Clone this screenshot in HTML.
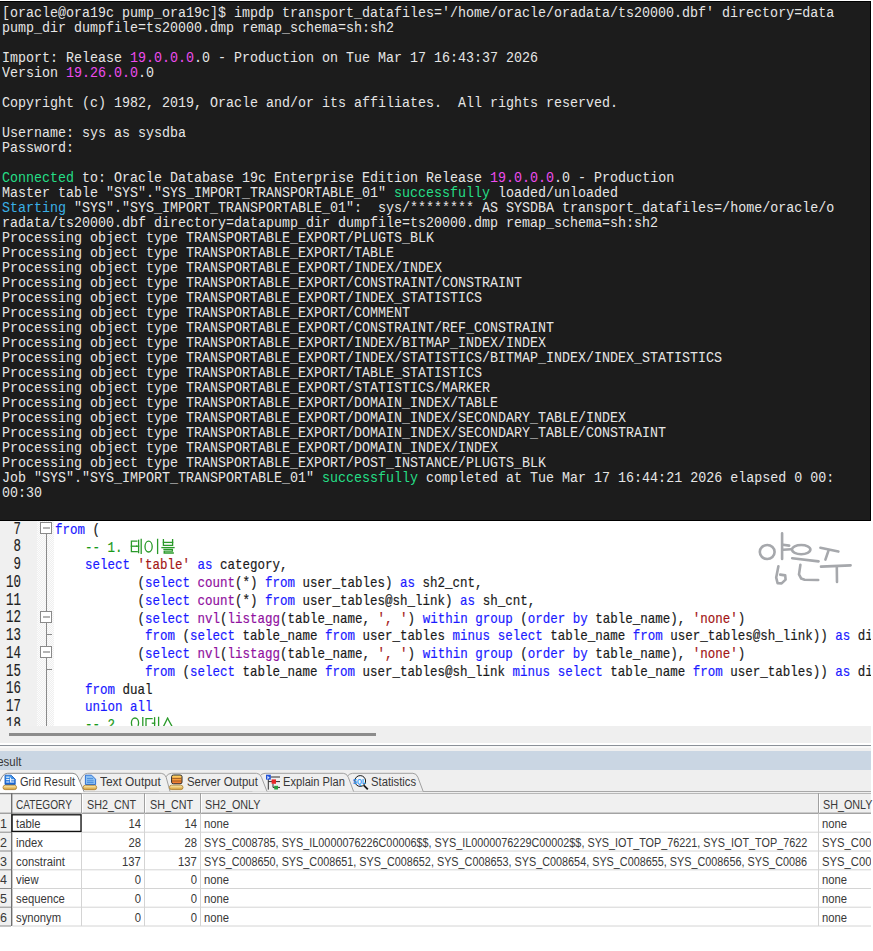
<!DOCTYPE html><html><head><meta charset="utf-8"><style>
*{margin:0;padding:0;box-sizing:border-box}
html,body{width:873px;height:951px;overflow:hidden;background:#fff}
body{position:relative;font-family:"Liberation Sans",sans-serif}
.a{position:absolute}
#term{left:0;top:1px;width:871px;height:520px;background:#1c1c1c;border:1px solid #000;border-left:none;overflow:hidden}
#tt{left:2px;top:4px;font-family:"Liberation Mono",monospace;font-size:14px;line-height:15px;color:#e6e6e6;white-space:pre;transform-origin:0 0;transform:scaleX(0.95238)}
.m{color:#ee4cee}.g{color:#25de86}.c{color:#3ab0e6}
#ed{left:0;top:521px;width:871px;height:206px;background:#fff;overflow:hidden}
#gut{left:0;top:0;width:37px;height:206px;background:#f0f0f0}
#hatch{left:37px;top:0;width:17px;height:206px;background-color:#fcfcfc;background-image:repeating-conic-gradient(#efefef 0 25%,#fcfcfc 0 50%);background-size:2px 2px}
.code{font-family:"Liberation Mono",monospace;font-size:15px;line-height:17.74px;color:#1a1a1a;-webkit-text-stroke:0.2px currentColor;white-space:pre;transform-origin:0 0;transform:scaleX(0.8333)}
.k{color:#1a1aff}.f{color:#9010a0}.s{color:#a31515}.cm{color:#1a9a1a}
.ln{-webkit-text-stroke:0.15px currentColor;font-family:"Liberation Mono",monospace;font-size:18px;line-height:17.74px;color:#202020;white-space:pre;text-align:right;width:28px;transform-origin:100% 0;transform:scaleX(0.69)}
.ui{font-family:"Liberation Sans",sans-serif;font-size:12.5px;color:#383838;white-space:pre;line-height:15px}
.sx{display:inline-block;transform-origin:0 0}
.sxr{display:inline-block;transform-origin:100% 0}
</style></head><body>
<div id="term" class="a"><div id="tt" class="a">[oracle@ora19c pump_ora19c]$ impdp transport_datafiles='/home/oracle/oradata/ts20000.dbf' directory=data
pump_dir dumpfile=ts20000.dmp remap_schema=sh:sh2

Import: Release <span class="m">19.0.0.0</span>.0 - Production on Tue Mar 17 16:43:37 2026
Version <span class="m">19.26.0.0</span>.0

Copyright (c) 1982, 2019, Oracle and/or its affiliates.  All rights reserved.

Username: sys as sysdba
Password:

<span class="g">Connected</span> to: Oracle Database 19c Enterprise Edition Release <span class="m">19.0.0.0</span>.0 - Production
Master table "SYS"."SYS_IMPORT_TRANSPORTABLE_01" <span class="g">successfully</span> loaded/unloaded
<span class="c">Starting</span> "SYS"."SYS_IMPORT_TRANSPORTABLE_01":  sys/******** AS SYSDBA transport_datafiles=/home/oracle/o
radata/ts20000.dbf directory=datapump_dir dumpfile=ts20000.dmp remap_schema=sh:sh2
Processing object type TRANSPORTABLE_EXPORT/PLUGTS_BLK
Processing object type TRANSPORTABLE_EXPORT/TABLE
Processing object type TRANSPORTABLE_EXPORT/INDEX/INDEX
Processing object type TRANSPORTABLE_EXPORT/CONSTRAINT/CONSTRAINT
Processing object type TRANSPORTABLE_EXPORT/INDEX_STATISTICS
Processing object type TRANSPORTABLE_EXPORT/COMMENT
Processing object type TRANSPORTABLE_EXPORT/CONSTRAINT/REF_CONSTRAINT
Processing object type TRANSPORTABLE_EXPORT/INDEX/BITMAP_INDEX/INDEX
Processing object type TRANSPORTABLE_EXPORT/INDEX/STATISTICS/BITMAP_INDEX/INDEX_STATISTICS
Processing object type TRANSPORTABLE_EXPORT/TABLE_STATISTICS
Processing object type TRANSPORTABLE_EXPORT/STATISTICS/MARKER
Processing object type TRANSPORTABLE_EXPORT/DOMAIN_INDEX/TABLE
Processing object type TRANSPORTABLE_EXPORT/DOMAIN_INDEX/SECONDARY_TABLE/INDEX
Processing object type TRANSPORTABLE_EXPORT/DOMAIN_INDEX/SECONDARY_TABLE/CONSTRAINT
Processing object type TRANSPORTABLE_EXPORT/DOMAIN_INDEX/INDEX
Processing object type TRANSPORTABLE_EXPORT/POST_INSTANCE/PLUGTS_BLK
Job "SYS"."SYS_IMPORT_TRANSPORTABLE_01" <span class="g">successfully</span> completed at Tue Mar 17 16:44:21 2026 elapsed 0 00:
00:30</div></div>
<div id="ed" class="a"><div id="gut" class="a"></div><div id="hatch" class="a"></div>
<div class="a ln" style="left:-6.8px;top:-0.3px">7
8
9
10
11
12
13
14
15
16
17
18</div>
<div class="a code" style="left:55px;top:1px"><span class="k">from</span> (
    <span class="cm">-- 1. </span>
    <span class="k">select</span> <span class="s">&#x27;table&#x27;</span> <span class="k">as</span> category,
           (<span class="k">select</span> <span class="f">count</span>(*) <span class="k">from</span> user_tables) <span class="k">as</span> sh2_cnt,
           (<span class="k">select</span> <span class="f">count</span>(*) <span class="k">from</span> user_tables@sh_link) <span class="k">as</span> sh_cnt,
           (<span class="k">select</span> <span class="f">nvl</span>(<span class="f">listagg</span>(table_name, <span class="s">&#x27;, &#x27;</span>) <span class="k">within</span> <span class="k">group</span> (<span class="k">order</span> <span class="k">by</span> table_name), <span class="s">&#x27;none&#x27;</span>)
            <span class="k">from</span> (<span class="k">select</span> table_name <span class="k">from</span> user_tables <span class="k">minus</span> <span class="k">select</span> table_name <span class="k">from</span> user_tables@sh_link)) <span class="k">as</span> di
           (<span class="k">select</span> <span class="f">nvl</span>(<span class="f">listagg</span>(table_name, <span class="s">&#x27;, &#x27;</span>) <span class="k">within</span> <span class="k">group</span> (<span class="k">order</span> <span class="k">by</span> table_name), <span class="s">&#x27;none&#x27;</span>)
            <span class="k">from</span> (<span class="k">select</span> table_name <span class="k">from</span> user_tables@sh_link <span class="k">minus</span> <span class="k">select</span> table_name <span class="k">from</span> user_tables)) <span class="k">as</span> di
    <span class="k">from</span> dual
    <span class="k">union</span> <span class="k">all</span>
    <span class="cm">-- 2. </span></div>
<svg class="a" style="left:0;top:0" width="871" height="206"><g stroke="#8a8a8a" stroke-width="1" fill="none" shape-rendering="crispEdges"><line x1="46.5" y1="13" x2="46.5" y2="206"/><rect x="40.5" y="1.5" width="11" height="11" fill="#fff"/><line x1="42.5" y1="7.0" x2="50" y2="7.0" stroke="#b4b4b4" stroke-width="1.8"/><rect x="40.5" y="90.2" width="11" height="11" fill="#fff"/><line x1="42.5" y1="95.7" x2="50" y2="95.7" stroke="#b4b4b4" stroke-width="1.8"/><rect x="40.5" y="125.7" width="11" height="11" fill="#fff"/><line x1="42.5" y1="131.2" x2="50" y2="131.2" stroke="#b4b4b4" stroke-width="1.8"/><line x1="46.5" y1="113.4" x2="52" y2="113.4"/><line x1="46.5" y1="148.9" x2="52" y2="148.9"/></g><g fill="none" stroke="#2a9a2a" stroke-width="1.3" stroke-linecap="square"><path d="M136.8 20.2 L131.4 20.2 L131.4 30.6 L137.2 30.6"/><path d="M131.4 25.2 L136.6 25.2"/><path d="M136.6 25.2 L138.6 25.2"/><path d="M138.6 19.3 L138.6 31.6"/><path d="M141.2 18.4 L141.2 32.4"/><path d="M157.6 18.4 L157.6 32.4"/><path d="M163.4 18.6 L163.4 24.4 L172.6 24.4 L172.6 18.6"/><path d="M163.4 21.4 L172.6 21.4"/><path d="M162.0 26.6 L174.0 26.6"/><path d="M164.0 28.4 L172.4 28.4 L172.4 30.2 L164.2 30.2 L164.2 32.0 L173.2 32.0"/><path d="M142.8 196.6 L142.8 209.0"/><path d="M152.0 197.6 L146.0 197.6 L146.0 207.0 L152.4 207.0"/><path d="M152.4 202.2 L154.6 202.2"/><path d="M154.6 196.8 L154.6 206.0"/><path d="M158.6 196.4 L158.6 209.0"/><path d="M167.6 197.2 L163.0 206.4"/><path d="M167.6 197.2 L172.6 206.4"/><ellipse cx="148.6" cy="25.6" rx="3.6" ry="5.4"/><ellipse cx="135.0" cy="202.0" rx="3.6" ry="5.0"/></g><g fill="none" stroke="#a6a8ac" stroke-width="2.6" stroke-linecap="round" stroke-linejoin="round"><path d="M782.1 12.4 L782.1 38.0"/><path d="M783.0 23.8 L789.2 24.6"/><path d="M783.2 28.8 L791.2 28.2"/><path d="M778.4 45.2 L776.2 56.6 L777.6 62.2 L781.6 62.4 L785.6 58.6 L785.2 54.4 L780.2 53.6"/><path d="M792.2 37.2 L818.6 40.4"/><path d="M800.4 43.8 L799.0 53.4 L801.2 57.6 L804.6 58.8 L818.2 59.0"/><path d="M820.4 26.8 L838.4 30.6"/><path d="M828.4 29.8 L825.4 38.6"/><path d="M821.0 45.6 L850.6 44.4"/><path d="M836.8 45.6 L837.0 61.0"/><ellipse cx="767.2" cy="31.0" rx="7.4" ry="7.0"/><ellipse cx="801.2" cy="28.6" rx="9.2" ry="4.6"/></g></svg>
</div>
<div class="a" style="left:0;top:726px;width:871px;height:16.5px;background:#efefef"></div>
<div class="a" style="left:9px;top:733px;width:367px;height:2.5px;background:#8c8c8c"></div>
<div class="a" style="left:0;top:742.5px;width:871px;height:2.2px;background:#fff"></div>
<div class="a" style="left:0;top:744.7px;width:871px;height:1.5px;background:#8a9098"></div>
<div class="a" style="left:0;top:746.2px;width:871px;height:2px;background:#f8f8f8"></div>
<div class="a" style="left:0;top:748.2px;width:871px;height:3px;background:#efefef"></div>
<div class="a" style="left:0;top:751.2px;width:871px;height:18.8px;background:#cad6e3"></div>
<div class="a ui" style="left:-10.8px;top:754.3px;font-size:13px"><span class="sx" style="transform:scaleX(.88)">Result</span></div>
<div class="a" style="left:0;top:770px;width:871px;height:23px;background:#efefef"></div>
<svg class="a" style="left:0;top:760px" width="871" height="40"><line x1="0" y1="31.5" x2="871" y2="31.5" stroke="#a8a8a8" stroke-width="1"/><path d="M339.6 31.5 L347.1 16.8 Q348.9 13.3 352.6 13.3 L412.9 13.3 Q416.4 13.3 417.9 17.3 L423.2 31.5" fill="#efefef" stroke="#a0a0a0" stroke-width="1"/><path d="M252.0 31.5 L259.5 16.8 Q261.3 13.3 265.0 13.3 L343.3 13.3 Q346.8 13.3 348.3 17.3 L353.6 31.5" fill="#efefef" stroke="#a0a0a0" stroke-width="1"/><path d="M158.5 31.5 L166.0 16.8 Q167.8 13.3 171.5 13.3 L256.5 13.3 Q260.0 13.3 261.5 17.3 L267.0 31.5" fill="#efefef" stroke="#a0a0a0" stroke-width="1"/><path d="M74.7 31.5 L82.2 16.8 Q84.0 13.3 87.7 13.3 L161.2 13.3 Q164.7 13.3 166.2 17.3 L170.0 31.5" fill="#efefef" stroke="#a0a0a0" stroke-width="1"/><path d="M-5.3 31.5 L2.2 16.8 Q4.0 13.3 7.7 13.3 L73.0 13.3 Q76.5 13.3 78.0 17.3 L84.0 31.5" fill="#ffffff" stroke="#8c8c8c" stroke-width="1"/><rect x="0" y="31.0" width="83.0" height="1.5" fill="#fff"/><g transform="translate(0,-760)"><defs><linearGradient id="gold" x1="0" y1="0" x2="0" y2="1"><stop offset="0" stop-color="#fff2b8"/><stop offset="1" stop-color="#d49a30"/></linearGradient><linearGradient id="blu" x1="0" y1="0" x2="0" y2="1"><stop offset="0" stop-color="#4aa0f0"/><stop offset="1" stop-color="#1560d0"/></linearGradient><linearGradient id="db" x1="0" y1="0" x2="0" y2="1"><stop offset="0" stop-color="#ffe070"/><stop offset=".5" stop-color="#f8a040"/><stop offset="1" stop-color="#f07030"/></linearGradient></defs><path d="M5.0 775.2 h6.2 l4 4 v5.3 h-10.2z" fill="url(#blu)" stroke="#1a5ec0" stroke-width="0.9"/><path d="M6.2 777.2h3.2M6.2 779.6h3.2M6.2 782h3.2M10.6 777.6v5M11 782h3.2M11 779.8h3.2" stroke="#fff" stroke-width="1"/><rect x="3.0" y="785.2" width="13.6" height="4.4" rx="2.2" fill="url(#gold)" stroke="#a87a2a" stroke-width="0.8"/><path d="M85.4 775.2 h6.2 l4 4 v5.3 h-10.2z" fill="#8cc0f2" stroke="#1f66d0" stroke-width="0.9"/><path d="M87 778.6h6M87 780.8h6.6M87 782.6h6.6" stroke="#3a80d8" stroke-width="0.8"/><rect x="83.1" y="785.3" width="13.6" height="4.4" rx="2.2" fill="url(#gold)" stroke="#a87a2a" stroke-width="0.8"/><path d="M171.6 776.6 q0-1.6 2-1.6 h6.4 q2 0 2 1.6 v5.6 q0 1.6-2 1.6 h-6.4 q-2 0-2-1.6z" fill="url(#db)" stroke="#2a2a2a" stroke-width="1"/><path d="M172.2 778.4h9.2M172.2 781h9.2" stroke="#8a4a18" stroke-width="0.8"/><rect x="169.4" y="785.2" width="13.6" height="4.4" rx="2.2" fill="url(#gold)" stroke="#a87a2a" stroke-width="0.8"/><path d="M268.3 779v10.6M270.5 777h9.5M268.5 781.6h11.5M273 783.6v3.8h7" stroke="#1a1a1a" stroke-width="0.9" fill="none"/><rect x="266" y="774.7" width="4.8" height="4.9" fill="#1f50d8"/><path d="M267.3 775.8l2.4 1.8-2.4 1.8z" fill="#cfe0ff"/><rect x="271.6" y="779.4" width="4.4" height="4.4" fill="#e82828"/><rect x="274.2" y="785.8" width="3.8" height="3.7" fill="#28a040"/><circle cx="360.2" cy="781" r="5.4" fill="#eef6fd" stroke="#1a1a1a" stroke-width="1"/><path d="M363.8 785.4l4 4" stroke="#1a1a1a" stroke-width="1.8"/><text x="352.8" y="784" font-family="Liberation Sans" font-size="7" font-weight="bold" fill="#2a8ef0" textLength="13" lengthAdjust="spacingAndGlyphs">SQL</text></g></svg>
<div class="a ui" style="left:19.5px;top:775.2px"><span class="sx" style="transform:scaleX(0.88)">Grid Result</span></div>
<div class="a ui" style="left:100.0px;top:775.2px"><span class="sx" style="transform:scaleX(0.95)">Text Output</span></div>
<div class="a ui" style="left:186.5px;top:775.2px"><span class="sx" style="transform:scaleX(0.91)">Server Output</span></div>
<div class="a ui" style="left:283.0px;top:775.2px"><span class="sx" style="transform:scaleX(0.89)">Explain Plan</span></div>
<div class="a ui" style="left:370.5px;top:775.2px"><span class="sx" style="transform:scaleX(0.9)">Statistics</span></div>
<svg class="a" style="left:0;top:0" width="871" height="951"><rect x="0" y="793.0" width="871" height="20.5" fill="#f0f0f0"/><rect x="0" y="813.5" width="11.5" height="112.5" fill="#f0f0f0"/><rect x="11.5" y="813.5" width="859.5" height="112.5" fill="#fff"/><line x1="0" y1="793.5" x2="871" y2="793.5" stroke="#b8b8b8" stroke-width="1"/><line x1="0" y1="813.2" x2="871" y2="813.2" stroke="#7c7c7c" stroke-width="1"/><line x1="0" y1="793.6" x2="81.5" y2="793.6" stroke="#888" stroke-width="1.2"/><line x1="81.5" y1="793.0" x2="81.5" y2="813.5" stroke="#a0a0a0" stroke-width="1"/><line x1="82.5" y1="794.0" x2="82.5" y2="812.5" stroke="#fff" stroke-width="1"/><line x1="81.5" y1="813.5" x2="81.5" y2="926.0" stroke="#d4d4d4" stroke-width="1"/><line x1="144.5" y1="793.0" x2="144.5" y2="813.5" stroke="#a0a0a0" stroke-width="1"/><line x1="145.5" y1="794.0" x2="145.5" y2="812.5" stroke="#fff" stroke-width="1"/><line x1="144.5" y1="813.5" x2="144.5" y2="926.0" stroke="#d4d4d4" stroke-width="1"/><line x1="200.5" y1="793.0" x2="200.5" y2="813.5" stroke="#a0a0a0" stroke-width="1"/><line x1="201.5" y1="794.0" x2="201.5" y2="812.5" stroke="#fff" stroke-width="1"/><line x1="200.5" y1="813.5" x2="200.5" y2="926.0" stroke="#d4d4d4" stroke-width="1"/><line x1="818.5" y1="793.0" x2="818.5" y2="813.5" stroke="#a0a0a0" stroke-width="1"/><line x1="819.5" y1="794.0" x2="819.5" y2="812.5" stroke="#fff" stroke-width="1"/><line x1="818.5" y1="813.5" x2="818.5" y2="926.0" stroke="#d4d4d4" stroke-width="1"/><line x1="11.7" y1="793.0" x2="11.7" y2="926.0" stroke="#707070" stroke-width="1.4"/><line x1="0" y1="832.2" x2="11" y2="832.2" stroke="#8a8a8a" stroke-width="1"/><line x1="12.4" y1="832.2" x2="871" y2="832.2" stroke="#d4d4d4" stroke-width="1"/><line x1="0" y1="851.0" x2="11" y2="851.0" stroke="#8a8a8a" stroke-width="1"/><line x1="12.4" y1="851.0" x2="871" y2="851.0" stroke="#d4d4d4" stroke-width="1"/><line x1="0" y1="869.8" x2="11" y2="869.8" stroke="#8a8a8a" stroke-width="1"/><line x1="12.4" y1="869.8" x2="871" y2="869.8" stroke="#d4d4d4" stroke-width="1"/><line x1="0" y1="888.5" x2="11" y2="888.5" stroke="#8a8a8a" stroke-width="1"/><line x1="12.4" y1="888.5" x2="871" y2="888.5" stroke="#d4d4d4" stroke-width="1"/><line x1="0" y1="907.2" x2="11" y2="907.2" stroke="#8a8a8a" stroke-width="1"/><line x1="12.4" y1="907.2" x2="871" y2="907.2" stroke="#d4d4d4" stroke-width="1"/><line x1="0" y1="926.0" x2="11" y2="926.0" stroke="#8a8a8a" stroke-width="1"/><line x1="12.4" y1="926.0" x2="871" y2="926.0" stroke="#d4d4d4" stroke-width="1"/><rect x="12" y="814.8" width="69" height="16.6" fill="none" stroke="#111" stroke-width="1.3"/></svg>
<div class="a ui" style="left:16.2px;top:797.7px"><span class="sx" style="transform:scaleX(.81)">CATEGORY</span></div>
<div class="a ui" style="left:86.5px;top:797.7px"><span class="sx" style="transform:scaleX(.86)">SH2_CNT</span></div>
<div class="a ui" style="left:149.5px;top:797.7px"><span class="sx" style="transform:scaleX(.86)">SH_CNT</span></div>
<div class="a ui" style="left:205.0px;top:797.7px"><span class="sx" style="transform:scaleX(.86)">SH2_ONLY</span></div>
<div class="a ui" style="left:822.5px;top:797.7px"><span class="sx" style="transform:scaleX(.86)">SH_ONLY</span></div>
<div class="a ui" style="left:-2px;top:817.0px;width:9px;text-align:right">1</div>
<div class="a ui" style="left:15.5px;top:817.0px"><span class="sx" style="transform:scaleX(.9)">table</span></div>
<div class="a ui" style="left:0;top:817.0px;width:141px;text-align:right"><span class="sxr" style="transform:scaleX(.9)">14</span></div>
<div class="a ui" style="left:0;top:817.0px;width:197px;text-align:right"><span class="sxr" style="transform:scaleX(.9)">14</span></div>
<div class="a ui" style="left:204px;top:817.0px;width:613px;overflow:hidden"><span class="sx" style="transform:scaleX(.9)">none</span></div>
<div class="a ui" style="left:822px;top:817.0px;width:49px;overflow:hidden"><span class="sx" style="transform:scaleX(.9)">none</span></div>
<div class="a ui" style="left:-2px;top:835.8px;width:9px;text-align:right">2</div>
<div class="a ui" style="left:15.5px;top:835.8px"><span class="sx" style="transform:scaleX(.9)">index</span></div>
<div class="a ui" style="left:0;top:835.8px;width:141px;text-align:right"><span class="sxr" style="transform:scaleX(.9)">28</span></div>
<div class="a ui" style="left:0;top:835.8px;width:197px;text-align:right"><span class="sxr" style="transform:scaleX(.9)">28</span></div>
<div class="a ui" style="left:204px;top:835.8px;width:613px;overflow:hidden"><span class="sx" style="transform:scaleX(.866)">SYS_C008785, SYS_IL0000076226C00006$$, SYS_IL0000076229C00002$$, SYS_IOT_TOP_76221, SYS_IOT_TOP_7622</span></div>
<div class="a ui" style="left:822px;top:835.8px;width:49px;overflow:hidden"><span class="sx" style="transform:scaleX(.9)">SYS_C007</span></div>
<div class="a ui" style="left:-2px;top:854.5px;width:9px;text-align:right">3</div>
<div class="a ui" style="left:15.5px;top:854.5px"><span class="sx" style="transform:scaleX(.9)">constraint</span></div>
<div class="a ui" style="left:0;top:854.5px;width:141px;text-align:right"><span class="sxr" style="transform:scaleX(.9)">137</span></div>
<div class="a ui" style="left:0;top:854.5px;width:197px;text-align:right"><span class="sxr" style="transform:scaleX(.9)">137</span></div>
<div class="a ui" style="left:204px;top:854.5px;width:613px;overflow:hidden"><span class="sx" style="transform:scaleX(.866)">SYS_C008650, SYS_C008651, SYS_C008652, SYS_C008653, SYS_C008654, SYS_C008655, SYS_C008656, SYS_C0086</span></div>
<div class="a ui" style="left:822px;top:854.5px;width:49px;overflow:hidden"><span class="sx" style="transform:scaleX(.9)">SYS_C007</span></div>
<div class="a ui" style="left:-2px;top:873.2px;width:9px;text-align:right">4</div>
<div class="a ui" style="left:15.5px;top:873.2px"><span class="sx" style="transform:scaleX(.9)">view</span></div>
<div class="a ui" style="left:0;top:873.2px;width:141px;text-align:right"><span class="sxr" style="transform:scaleX(.9)">0</span></div>
<div class="a ui" style="left:0;top:873.2px;width:197px;text-align:right"><span class="sxr" style="transform:scaleX(.9)">0</span></div>
<div class="a ui" style="left:204px;top:873.2px;width:613px;overflow:hidden"><span class="sx" style="transform:scaleX(.9)">none</span></div>
<div class="a ui" style="left:822px;top:873.2px;width:49px;overflow:hidden"><span class="sx" style="transform:scaleX(.9)">none</span></div>
<div class="a ui" style="left:-2px;top:892.0px;width:9px;text-align:right">5</div>
<div class="a ui" style="left:15.5px;top:892.0px"><span class="sx" style="transform:scaleX(.9)">sequence</span></div>
<div class="a ui" style="left:0;top:892.0px;width:141px;text-align:right"><span class="sxr" style="transform:scaleX(.9)">0</span></div>
<div class="a ui" style="left:0;top:892.0px;width:197px;text-align:right"><span class="sxr" style="transform:scaleX(.9)">0</span></div>
<div class="a ui" style="left:204px;top:892.0px;width:613px;overflow:hidden"><span class="sx" style="transform:scaleX(.9)">none</span></div>
<div class="a ui" style="left:822px;top:892.0px;width:49px;overflow:hidden"><span class="sx" style="transform:scaleX(.9)">none</span></div>
<div class="a ui" style="left:-2px;top:910.8px;width:9px;text-align:right">6</div>
<div class="a ui" style="left:15.5px;top:910.8px"><span class="sx" style="transform:scaleX(.9)">synonym</span></div>
<div class="a ui" style="left:0;top:910.8px;width:141px;text-align:right"><span class="sxr" style="transform:scaleX(.9)">0</span></div>
<div class="a ui" style="left:0;top:910.8px;width:197px;text-align:right"><span class="sxr" style="transform:scaleX(.9)">0</span></div>
<div class="a ui" style="left:204px;top:910.8px;width:613px;overflow:hidden"><span class="sx" style="transform:scaleX(.9)">none</span></div>
<div class="a ui" style="left:822px;top:910.8px;width:49px;overflow:hidden"><span class="sx" style="transform:scaleX(.9)">none</span></div>
</body></html>
